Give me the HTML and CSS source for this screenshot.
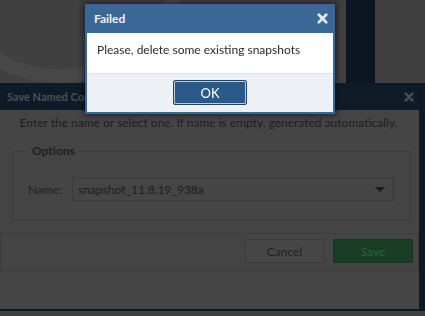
FILE: index.html
```html
<!DOCTYPE html>
<html lang="en">
<head>
    <meta charset="UTF-8">
    <meta name="viewport" content="width=device-width, initial-scale=1.0">
    <title>Save Named Configuration</title>
    <link rel="stylesheet" href="styles.css">
</head>
<body>
    <!-- desktop behind the modal -->
    <div class="desk">
        <div class="ring"></div>
        <div class="strip"></div>
    </div>

    <!-- back dialog, dimmed by the modal -->
    <div class="dlg">
        <div class="dlg-head">
            <span class="dlg-title">Save Named Configuration</span>
            <svg class="x" width="10" height="10" viewBox="0 0 12 12"><path d="M2 2L10 10M10 2L2 10" /></svg>
        </div>
        <div class="dlg-body">
            <p class="hint">Enter the name or select one. If name is empty, generated automatically.</p>
            <fieldset class="opts">
                <legend>Options</legend>
                <div class="row">
                    <label class="lbl">Name:</label>
                    <div class="select">
                        <span>snapshot_11.8.19_938a</span>
                        <i class="caret"></i>
                    </div>
                </div>
            </fieldset>
        </div>
        <div class="dlg-foot">
            <button class="btn cancel">Cancel</button>
            <button class="btn save">Save</button>
        </div>
    </div>

    <!-- message box -->
    <div class="msg">
        <div class="msg-head">
            <span>Failed</span>
            <svg class="x" width="11" height="11" viewBox="0 0 12 12"><path d="M2 2L10 10M10 2L2 10" /></svg>
        </div>
        <div class="msg-body">Please, delete some existing snapshots</div>
        <div class="msg-foot">
            <button class="ok">OK</button>
        </div>
    </div>
</body>
</html>
```

FILE: styles.css
```css
/* reset */
html, body{
    margin: 0;
    padding: 0;
}
body{
    width: 425px;
    height: 316px;
    overflow: hidden;
    background: #404040;
    font-family: Lato, "Open Sans", sans-serif;
    font-size: 12px;
}

/* desktop */
.desk{
    position: fixed;
    top: 0;
    left: 0;
    right: 0;
    bottom: 0;
    background: #404040;
}
.ring{
    position: absolute;
    left: -70px;
    top: -175px;
    width: 230px;
    height: 230px;
    border-radius: 50%;
    border: 14px solid #484848;
}
.strip{
    position: absolute;
    left: 346px;
    top: 0;
    width: 29px;
    height: 90px;
    background: #0b1622;
}

/* back dialog */
.dlg{
    position: absolute;
    left: -2px;
    top: 83px;
    width: 428px;
    height: 228px;
    box-sizing: border-box;
    background: #454545;
    border-right: 7px solid #0e1923;
    border-bottom: 2px solid #0d1821;
}
.dlg-head{
    display: flex;
    align-items: center;
    justify-content: space-between;
    height: 27px;
    padding: 0 5px 0 9px;
    background: #0f1b26;
}
.dlg-title{
    color: #47505a;
    font-size: 11px;
    font-weight: bold;
}
.dlg-head .x path{
    stroke: #4f4f4f;
}
.x path{
    fill: none;
    stroke-width: 3;
    stroke-linecap: round;
}

.dlg-body{
    padding-top: 5px;
}
.hint{
    margin: 0;
    line-height: 16px;
    text-align: center;
    color: #1d1d1d;
}
.opts{
    margin: 12px 8px 0 14px;
    padding: 18px 16px 19px 15px;
    border: 1px solid #3b3b3b;
}
.opts legend{
    padding: 0 4px;
    line-height: 16px;
    color: #1f1f1f;
    font-weight: bold;
}
.row{
    display: flex;
    align-items: center;
}
.lbl{
    width: 44px;
    color: #222;
}
.select{
    flex: 1;
    display: flex;
    align-items: center;
    justify-content: space-between;
    height: 24px;
    box-sizing: border-box;
    padding: 0 8px 0 5px;
    border: 1px solid #3a3a3a;
    color: #1d1d1d;
}
.caret{
    width: 0;
    height: 0;
    border-left: 5px solid transparent;
    border-right: 5px solid transparent;
    border-top: 5px solid #1d1d1d;
}

.dlg-foot{
    display: flex;
    justify-content: flex-end;
    gap: 9px;
    margin: 12px 0 0 2px;
    padding: 5px 5px 7px;
    border: 1px solid #3c3c3c;
}
.btn{
    height: 24px;
    padding: 0;
    font-family: inherit;
    font-size: 12px;
    border-radius: 2px;
}
.cancel{
    width: 79px;
    background: #474747;
    border: 1px solid #3a3a3a;
    color: #222;
}
.save{
    width: 80px;
    background: #193d24;
    border: 1px solid #15331e;
    color: #335f40;
}

/* message box */
.msg{
    position: absolute;
    left: 85px;
    top: 4px;
    width: 250px;
    box-sizing: border-box;
    border: 2px solid #3a6896;
    border-top: 0;
    box-shadow: 0 0 6px 2px rgba(0, 0, 0, .45);
}
.msg-head{
    display: flex;
    align-items: center;
    justify-content: space-between;
    height: 29px;
    padding: 0 5px 0 7px;
    background: #3a6896;
    color: #eef2f7;
    font-weight: bold;
    font-size: 12px;
}
.msg-head .x path{
    stroke: #e3eaf2;
}
.msg-body{
    height: 40px;
    box-sizing: border-box;
    padding: 9px 10px 0;
    background: #fff;
    color: #2b2b2b;
    line-height: 16px;
}
.msg-foot{
    display: flex;
    justify-content: center;
    padding: 6px 0 7px;
    background: #edf1f5;
    border-top: 1px solid #dfe5ec;
}
.ok{
    width: 74px;
    height: 25px;
    padding: 0;
    background: #2a5a8a;
    border: 1px solid #1f4670;
    box-shadow: inset 0 0 0 1px #b9cbe0;
    border-radius: 2px;
    color: #fff;
    font-family: inherit;
    font-size: 13px;
}
```
